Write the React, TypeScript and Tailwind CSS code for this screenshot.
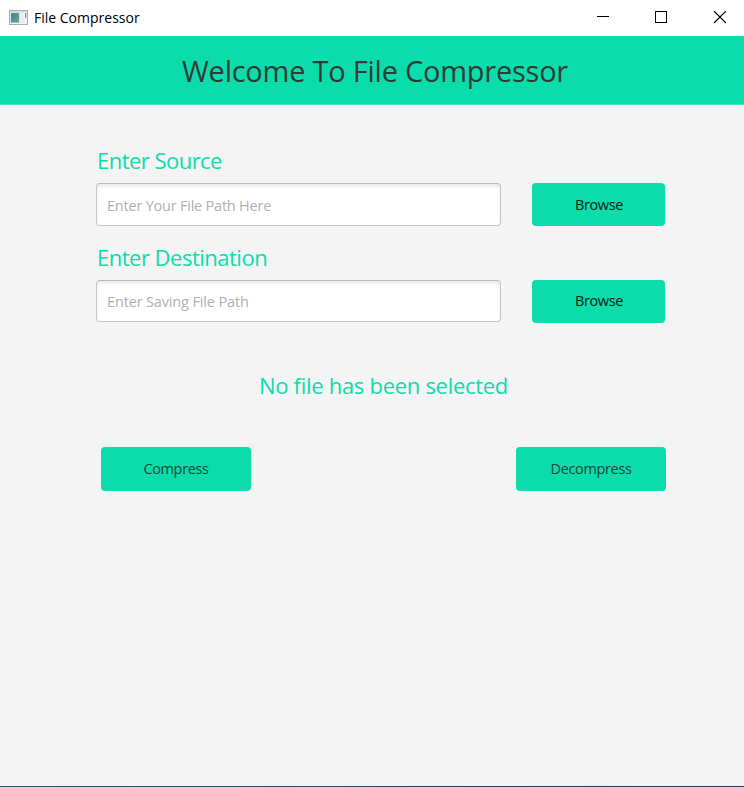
import React from "react";

const labelText = "text-[22px] leading-[30px] text-[#0adcab] whitespace-nowrap";
const button =
  "flex items-center justify-center rounded-[4px] bg-[#0adcab] text-[14.5px] leading-5 tracking-[-0.35px] whitespace-nowrap";

function WindowIcon() {
  return (
    <svg width="19" height="16" viewBox="0 0 19 16" className="block">
      <defs>
        <linearGradient id="pane" x1="0" y1="0" x2="1" y2="1">
          <stop offset="0" stopColor="#3f78a8" />
          <stop offset="1" stopColor="#5fae7c" />
        </linearGradient>
      </defs>
      <rect x="0.5" y="0.5" width="18" height="14" fill="#f3f4f5" stroke="#a9adb0" />
      <rect x="1" y="1" width="17" height="1.5" fill="#d5d9dc" />
      <rect x="2" y="3" width="8" height="9.5" fill="url(#pane)" stroke="#8faab0" strokeWidth="0.5" />
      <rect x="11" y="3" width="4" height="9.5" fill="#e9ebed" />
      <rect x="16" y="3" width="1.2" height="5" fill="#5b9a92" />
    </svg>
  );
}

function TitleBar() {
  return (
    <div className="flex h-9 items-center bg-white pl-[9px] pr-[18px]">
      <WindowIcon />
      <span className="ml-[6px] grow text-[14px] leading-5 text-black">File Compressor</span>
      <svg width="130" height="14" viewBox="0 0 130 14" fill="none" stroke="#000" strokeWidth="1" className="block">
        <path d="M1 5.5H13" shapeRendering="crispEdges" />
        <path d="M59.5 0.5H70.5V11.5H59.5Z" shapeRendering="crispEdges" />
        <path d="M118 0L130 12M130 0L118 12" strokeWidth="1.2" />
      </svg>
    </div>
  );
}

function PathField({
  label,
  placeholder,
  labelClass,
  inputClass,
  hintClass,
  buttonClass,
}: {
  label: string;
  placeholder: string;
  labelClass: string;
  inputClass: string;
  hintClass: string;
  buttonClass: string;
}) {
  return (
    <section>
      <div className={`${labelText} ${labelClass}`}>{label}</div>
      <div className="mt-2 flex h-[43px] items-start">
        <div
          className={`-ml-px flex w-[405px] items-center rounded-[4px] border border-[#c6c6c6] border-t-[#b9b9b9] bg-white pl-[10px] shadow-[inset_0_3px_4px_-1px_#e4e4e4] ${inputClass}`}
        >
          <span className={`text-[14.5px] leading-5 text-[#b0b0b0] ${hintClass}`}>{placeholder}</span>
        </div>
        <button className={`${button} ml-[31px] w-[133px] pl-px text-[#101a17] ${buttonClass}`}>Browse</button>
      </div>
    </section>
  );
}

export default function App() {
  return (
    <div className="flex h-[787px] w-[744px] flex-col overflow-hidden bg-[#f4f4f4] font-['Open_Sans','Noto_Sans',sans-serif]">
      <TitleBar />
      <header className="flex h-[69px] items-center justify-center border-b border-[#40e3bc] bg-[#0adcab] pl-[6px] pt-px">
        <h1 className="text-[29px] leading-10 tracking-[-0.24px] whitespace-nowrap text-[#2f3b37]">
          Welcome To File Compressor
        </h1>
      </header>
      <main className="flex grow flex-col pt-10">
        <div className="pl-[97px]">
          <PathField
            label="Enter Source"
            placeholder="Enter Your File Path Here"
            labelClass="tracking-[-0.53px]"
            inputClass="h-[43px] pt-[2px]"
            hintClass="tracking-[-0.22px]"
            buttonClass="h-[43px]"
          />
          <div className="h-4" />
          <PathField
            label="Enter Destination"
            placeholder="Enter Saving File Path"
            labelClass="tracking-[-0.5px]"
            inputClass="h-[42px] pt-[2px]"
            hintClass="tracking-[-0.15px]"
            buttonClass="h-[43px] pb-px"
          />
        </div>
        <p className={`${labelText} mt-[47px] pl-[23px] text-center tracking-[-0.29px]`}>No file has been selected</p>
        <div className="mt-[47px] flex justify-between pl-[101px] pr-[78px]">
          <button className={`${button} h-11 w-[150px] text-[#21443a]`}>Compress</button>
          <button className={`${button} h-11 w-[150px] text-[#21443a]`}>Decompress</button>
        </div>
      </main>
      <footer className="h-px bg-linear-to-r from-[#23566f] to-[#203a5c]" />
    </div>
  );
}
